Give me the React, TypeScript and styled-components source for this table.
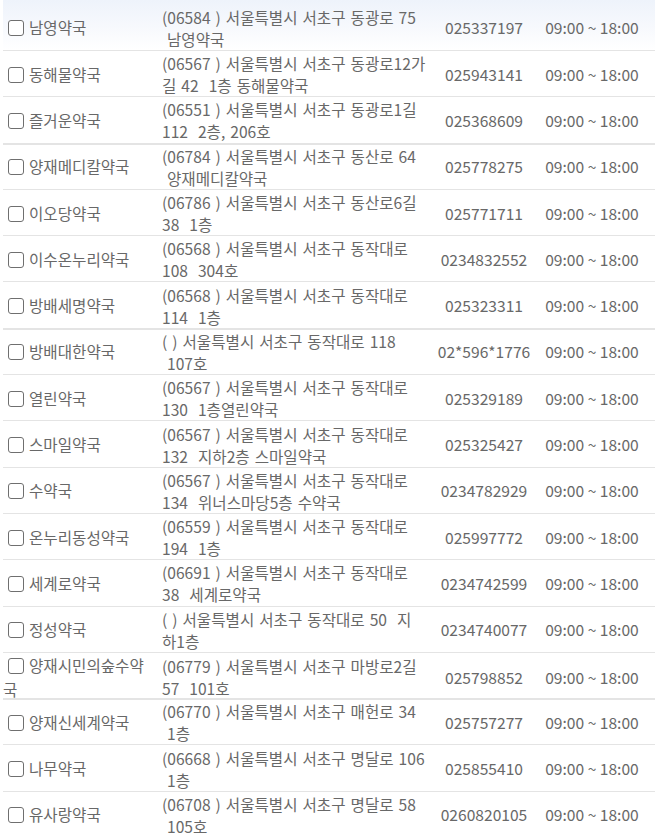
import React from "react";
import styled, { createGlobalStyle } from "styled-components";

const GlobalStyle = createGlobalStyle`
  html, body {
    margin: 0;
    padding: 0;
    background: #ffffff;
    overflow: hidden;
  }
  body {
    font-family: "Noto Sans CJK KR", "Noto Sans", sans-serif;
    font-size: 15.6px;
    color: #686868;
  }
`;

const List = styled.div`
  width: 655px;
  display: flex;
  flex-direction: column;
`;

const Row = styled.div<{ $first?: boolean; $thick?: boolean }>`
  display: grid;
  grid-template-columns: 152px 282px 94px 1fr;
  align-items: center;
  box-sizing: border-box;
  flex: none;
  height: ${(p) => (p.$first ? "51px" : "46.31px")};
  margin-left: 3px;
  padding-top: ${(p) => (p.$first ? "4.7px" : "0")};
  border-bottom: 1px solid #e4e4e4;
  box-shadow: ${(p) => (p.$thick ? "0 1px 0 #e4e4e4" : "none")};
  line-height: 22px;
  word-spacing: 1.5px;
  background: ${(p) =>
    p.$first ? "linear-gradient(180deg, #eef3fb 0%, #f7f9fd 55%, #ffffff 100%)" : "transparent"};
`;

const NameCell = styled.div`
  line-height: 24px;
`;

const Check = styled.span`
  display: inline-block;
  box-sizing: border-box;
  width: 16px;
  height: 16px;
  margin: 0 5px 0 5px;
  border: 1.5px solid #6f6f6f;
  border-radius: 3px;
  background: #fff;
  vertical-align: -2px;
`;

const AddressCell = styled.div`
  padding-left: 7px;
  padding-top: 1px;
`;

const Line = styled.span`
  display: block;
  white-space: nowrap;
`;

const PhoneCell = styled.div`
  text-align: center;
  white-space: nowrap;
  word-spacing: 0;
`;

const HoursCell = styled.div`
  text-align: center;
  white-space: nowrap;
  padding-right: 2px;
  word-spacing: 0;
`;

type Pharmacy = {
  name: string;
  addr: [string, string];
  phone: string;
  thick?: boolean;
};

const NB = "\u00a0";

const data: Pharmacy[] = [
  { name: "남영약국", addr: ["(06584 ) 서울특별시 서초구 동광로 75", `${NB}남영약국`], phone: "025337197" },
  { name: "동해물약국", addr: ["(06567 ) 서울특별시 서초구 동광로12가", `길 42${NB}${NB}1층 동해물약국`], phone: "025943141" },
  { name: "즐거운약국", addr: ["(06551 ) 서울특별시 서초구 동광로1길", `112${NB}${NB}2층, 206호`], phone: "025368609", thick: true },
  { name: "양재메디칼약국", addr: ["(06784 ) 서울특별시 서초구 동산로 64", `${NB}양재메디칼약국`], phone: "025778275" },
  { name: "이오당약국", addr: ["(06786 ) 서울특별시 서초구 동산로6길", `38${NB}${NB}1층`], phone: "025771711" },
  { name: "이수온누리약국", addr: ["(06568 ) 서울특별시 서초구 동작대로", `108${NB}${NB}304호`], phone: "0234832552" },
  { name: "방배세명약국", addr: ["(06568 ) 서울특별시 서초구 동작대로", `114${NB}${NB}1층`], phone: "025323311", thick: true },
  { name: "방배대한약국", addr: ["( ) 서울특별시 서초구 동작대로 118", `${NB}107호`], phone: "02*596*1776" },
  { name: "열린약국", addr: ["(06567 ) 서울특별시 서초구 동작대로", `130${NB}${NB}1층열린약국`], phone: "025329189" },
  { name: "스마일약국", addr: ["(06567 ) 서울특별시 서초구 동작대로", `132${NB}${NB}지하2층 스마일약국`], phone: "025325427" },
  { name: "수약국", addr: ["(06567 ) 서울특별시 서초구 동작대로", `134${NB}${NB}위너스마당5층 수약국`], phone: "0234782929" },
  { name: "온누리동성약국", addr: ["(06559 ) 서울특별시 서초구 동작대로", `194${NB}${NB}1층`], phone: "025997772" },
  { name: "세계로약국", addr: ["(06691 ) 서울특별시 서초구 동작대로", `38${NB}${NB}세계로약국`], phone: "0234742599" },
  { name: "정성약국", addr: [`( ) 서울특별시 서초구 동작대로 50${NB}${NB}지`, "하1층"], phone: "0234740077" },
  { name: "양재시민의숲수약국", addr: ["(06779 ) 서울특별시 서초구 마방로2길", `57${NB}${NB}101호`], phone: "025798852", thick: true },
  { name: "양재신세계약국", addr: ["(06770 ) 서울특별시 서초구 매헌로 34", `${NB}1층`], phone: "025757277" },
  { name: "나무약국", addr: ["(06668 ) 서울특별시 서초구 명달로 106", `${NB}1층`], phone: "025855410" },
  { name: "유사랑약국", addr: ["(06708 ) 서울특별시 서초구 명달로 58", `${NB}105호`], phone: "0260820105" },
];

export default function App() {
  return (
    <>
      <GlobalStyle />
      <List>
        {data.map((p, i) => (
          <Row key={p.name} $first={i === 0} $thick={p.thick}>
            <NameCell>
              <Check />
              {p.name}
            </NameCell>
            <AddressCell>
              <Line>{p.addr[0]}</Line>
              <Line>{p.addr[1]}</Line>
            </AddressCell>
            <PhoneCell>{p.phone}</PhoneCell>
            <HoursCell>09:00 ~ 18:00</HoursCell>
          </Row>
        ))}
      </List>
    </>
  );
}
